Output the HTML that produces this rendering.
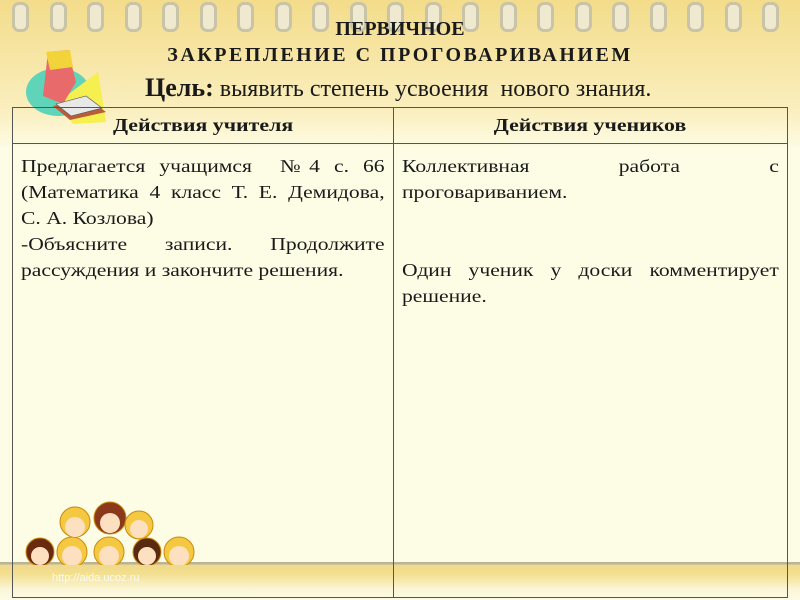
<!DOCTYPE html>
<html><head><meta charset="utf-8"><style>
body{margin:0;width:800px;height:600px;overflow:hidden;position:relative;background:#fdfde6;font-family:"Liberation Serif",serif;color:#1a1a1a}
.top{position:absolute;left:0;top:0;width:800px;height:150px;background:linear-gradient(180deg,#f3dc8a 0%,#f7e6a6 40%,#faefc0 75%,#fdfde6 100%)}
.ring{position:absolute;top:2px;width:11px;height:24px;border:3px solid #c9c3a8;border-radius:7px;background:#efe9cf}
.bot{position:absolute;left:0;top:562px;width:800px;height:38px;background:linear-gradient(180deg,#b8b39a 0,#b8b39a 2px,#efd98a 3px,#f3df8f 12px,#f7ebb5 20px,#fbf6d8 28px,#fdfbe6 38px)}
.url{position:absolute;left:52px;top:572px;font:11px "Liberation Sans",sans-serif;color:#fff;opacity:.85}
.t1{position:absolute;left:0;width:800px;text-align:center;font-weight:bold;font-size:20px}
table{position:absolute;left:12px;top:107px;width:776px;height:491px;border-collapse:collapse}
td{border:1.5px solid #555;vertical-align:top;font-size:18px;line-height:26px;padding:9px 8px 6px}
.s{transform:scaleX(1.2);transform-origin:0 0}
td .s div{text-align:justify;text-align-last:justify;height:26px}
td .s div.l{text-align-last:left}
th{border:1.5px solid #555;height:27px;font-size:17.5px;font-weight:bold;padding:4px}
th span{display:inline-block;transform:scaleX(1.25)}
</style></head><body>
<div class="top"></div>
<div id="rings"></div>
<div class="bot"></div>
<div class="url">http://aida.ucoz.ru</div>
<div class="t1" style="top:18px">ПЕРВИЧНОЕ</div>
<div class="t1" style="top:44px;letter-spacing:2.5px">ЗАКРЕПЛЕНИЕ С ПРОГОВАРИВАНИЕМ</div>
<div style="position:absolute;left:145px;top:73px;font-size:24px;white-space:nowrap"><b style="font-size:26px">Цель:</b> выявить степень усвоения&nbsp; нового знания.</div>
<svg style="position:absolute;left:18px;top:42px" width="92" height="82">
<ellipse cx="40" cy="50" rx="32" ry="24" fill="#5fd4b8"/>
<polygon points="40,60 80,30 88,80 55,82" fill="#f5f050"/>
<path d="M30 10 L50 8 L58 40 L45 62 L25 54 Z" fill="#e86a6a"/>
<path d="M28 10 L52 8 L55 25 L32 28 Z" fill="#f2d43a"/>
<polygon points="35,64 70,57 88,70 52,78" fill="#b85c3a"/>
<polygon points="38,62 68,54 84,66 53,74" fill="#e8e8e8" stroke="#555" stroke-width=".6"/>
</svg>
<table>
<tr><th style="width:372px"><span>Действия учителя</span></th><th><span>Действия учеников</span></th></tr>
<tr><td><div class="s" style="width:303px"><div>Предлагается учащимся &nbsp;№4 с. 66</div><div>(Математика 4 класс Т. Е. Демидова,</div><div class="l">С. А. Козлова)</div><div>-Объясните записи. Продолжите</div><div class="l">рассуждения и закончите решения.</div></div></td>
<td><div class="s" style="width:314px"><div>Коллективная работа с</div><div class="l">проговариванием.</div><div></div><div></div><div>Один ученик у доски комментирует</div><div class="l">решение.</div></div></td></tr>
</table>
<svg style="position:absolute;left:12px;top:500px" width="185" height="65">
<g stroke="#c98a10" stroke-width="1">
<circle cx="63" cy="22" r="15" fill="#f5c842"/><circle cx="98" cy="18" r="16" fill="#8a3a1a"/><circle cx="127" cy="25" r="14" fill="#f5c842"/>
<circle cx="28" cy="52" r="14" fill="#6a2a10"/><circle cx="60" cy="52" r="15" fill="#f5c842"/><circle cx="97" cy="52" r="15" fill="#f5c842"/><circle cx="135" cy="52" r="14" fill="#5a2a10"/><circle cx="167" cy="52" r="15" fill="#f5c842"/>
</g>
<g fill="#fde0c0"><circle cx="63" cy="27" r="10"/><circle cx="98" cy="23" r="10"/><circle cx="127" cy="29" r="9"/><circle cx="28" cy="56" r="9"/><circle cx="60" cy="56" r="10"/><circle cx="97" cy="56" r="10"/><circle cx="135" cy="56" r="9"/><circle cx="167" cy="56" r="10"/></g>
</svg>
<script>
var r=document.getElementById('rings'),h='';for(var i=0;i<21;i++){h+='<div class="ring" style="left:'+(12+i*37.5)+'px"></div>'}r.innerHTML=h;
</script>
</body></html>
